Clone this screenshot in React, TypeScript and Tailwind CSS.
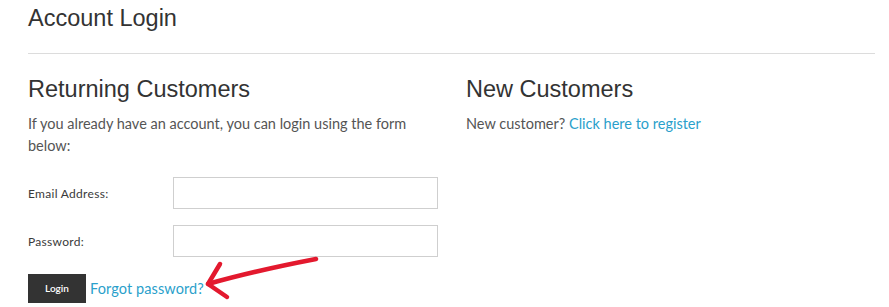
import React from 'react';

const headingFont = "font-['Liberation_Sans',Arial,sans-serif]";
const bodyFont = "font-['Lato','Open_Sans',sans-serif]";

const Field: React.FC<{ label: string; type?: string }> = ({ label, type = 'text' }) => (
  <div className="flex items-center">
    <label className={`w-[145px] pt-[2px] text-[12px] tracking-[0.3px] text-[#3a3a3a] ${bodyFont}`}>{label}</label>
    <input
      type={type}
      className="w-[265px] h-[32px] border border-[#cfcfcf] bg-white focus:outline-none"
    />
  </div>
);

export default function App() {
  return (
    <div className="relative w-[889px] h-[307px] overflow-hidden bg-white text-[#333]">
      <div className="pl-[28px] pr-[14px] pt-[4px]">
        <h1 className={`${headingFont} text-[23.5px] leading-[29px] text-[#333]`}>Account Login</h1>
        <hr className="mt-[20px] border-0 border-t border-[#dcdcdc]" />

        <div className="flex gap-[28px] mt-[21px]">
          {/* Returning customers */}
          <div className="w-[410px]">
            <h2 className={`${headingFont} text-[23.5px] leading-[29px] text-[#333]`}>Returning Customers</h2>
            <p className={`${bodyFont} mt-[9px] text-[14.5px] leading-[22px] text-[#555]`}>
              If you already have an account, you can login using the form below:
            </p>

            <div className="mt-[20px] flex flex-col gap-[16px]">
              <Field label="Email Address:" />
              <Field label="Password:" type="password" />
            </div>

            <div className="mt-[17px] flex items-center gap-[4px]">
              <button className={`${bodyFont} w-[58px] h-[29px] bg-[#333] text-white text-[10px] font-semibold`}>
                Login
              </button>
              <a href="#" className={`${bodyFont} text-[14.5px] tracking-[0.1px] text-[#2a9fcb]`}>Forgot password?</a>
            </div>
          </div>

          {/* New customers */}
          <div>
            <h2 className={`${headingFont} text-[23.5px] leading-[29px] text-[#333]`}>New Customers</h2>
            <p className={`${bodyFont} mt-[9px] text-[14.5px] leading-[22px] text-[#555]`}>
              New customer? <a href="#" className="text-[#2a9fcb]">Click here to register</a>
            </p>
          </div>
        </div>
      </div>

      {/* hand-drawn annotation arrow */}
      <svg className="absolute left-0 top-0 pointer-events-none" width="889" height="307" viewBox="0 0 889 307">
        <g fill="none" stroke="#e3192e" strokeWidth="4.5" strokeLinecap="round" strokeLinejoin="round">
          <path d="M316 259 C 290 264, 250 272, 208 284" />
          <path d="M220 264 L 208 284 L 227 297" />
        </g>
      </svg>
    </div>
  );
}
